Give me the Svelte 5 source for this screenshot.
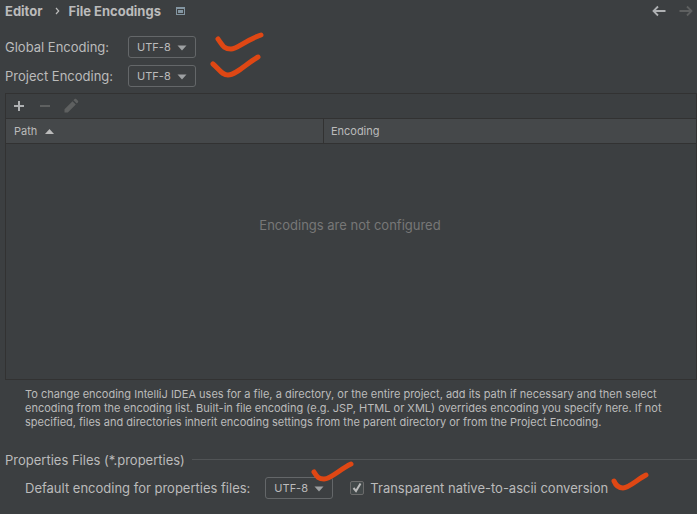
<script lang="ts">
	const encodings = ["UTF-8", "UTF-16", "US-ASCII", "ISO-8859-1"];

	let globalEncoding = $state("UTF-8");
	let projectEncoding = $state("UTF-8");
	let propertiesEncoding = $state("UTF-8");
	let nativeToAscii = $state(true);
</script>

{#snippet options()}
	{#each encodings as encoding}
		<option value={encoding}>{encoding}</option>
	{/each}
{/snippet}

{#snippet arrow()}
	<svg class="arrow" width="10" height="6" viewBox="0 0 10 6" aria-hidden="true">
		<path d="M0.5 0.5h9L5 5.5z" fill="#9da0a2" />
	</svg>
{/snippet}

<main class="settings">
	<header>
		<nav class="crumbs" aria-label="Breadcrumb">
			<a href="#editor">Editor</a>
			<svg width="5" height="8" viewBox="0 0 5 8" aria-hidden="true">
				<path d="M1 1l2.7 3L1 7" fill="none" stroke="#bbbbbb" stroke-width="1.2" />
			</svg>
			<a href="#file-encodings">File Encodings</a>
			<svg class="project-icon" width="9" height="8" viewBox="0 0 9 8" aria-hidden="true">
				<path d="M0 0h9v8H0zM1 2v5h7V2z" fill="#8496a2" fill-rule="evenodd" />
				<path d="M2 3h5v3H2z" fill="#8496a2" />
			</svg>
		</nav>
		<div class="history">
			<button aria-label="Back">
				<svg width="14" height="12" viewBox="0 0 14 12">
					<path d="M13.5 6H1.5M6 1.5L1.5 6L6 10.5" fill="none" stroke="#afb1b3" stroke-width="1.8" />
				</svg>
			</button>
			<button aria-label="Forward" disabled>
				<svg width="14" height="12" viewBox="0 0 14 12">
					<path d="M0.5 6h12M8 1.5l4.5 4.5L8 10.5" fill="none" stroke="#5e6060" stroke-width="1.8" />
				</svg>
			</button>
		</div>
	</header>

	<div class="encodings">
		<label for="global">Global Encoding:</label>
		<div class="select">
			<select id="global" bind:value={globalEncoding}>{@render options()}</select>
			{@render arrow()}
			<svg class="mark global" width="50" height="22" viewBox="0 0 50 22" aria-hidden="true">
				<path d="M3 7C8 14 9 17 16 17C22 17 31 8 46 3" />
			</svg>
		</div>
		<label for="project">Project Encoding:</label>
		<div class="select">
			<select id="project" bind:value={projectEncoding}>{@render options()}</select>
			{@render arrow()}
			<svg class="mark project" width="52" height="24" viewBox="0 0 52 24" aria-hidden="true">
				<path d="M3 10C10 16 12 21 18 21C26 21 37 9 48 3" />
			</svg>
		</div>
	</div>

	<section class="paths">
		<div class="toolbar">
			<button aria-label="Add">
				<svg width="16" height="16" viewBox="0 0 16 16">
					<path d="M8 3v10M3 8h10" stroke="#afb1b3" stroke-width="2" />
				</svg>
			</button>
			<button aria-label="Remove" disabled>
				<svg width="16" height="16" viewBox="0 0 16 16">
					<path d="M3 8h10" stroke="#5e6060" stroke-width="2" />
				</svg>
			</button>
			<button aria-label="Edit" disabled>
				<svg width="16" height="16" viewBox="0 0 16 16">
					<path d="M1.5 14.5v-3.3L9.5 3.2l3.3 3.3l-8 8zM10.4 2.3l1.2-1.2c.5-.5 1.1-.5 1.6 0l1.7 1.7c.5.5.5 1.1 0 1.6l-1.2 1.2z" fill="#5e6060" />
				</svg>
			</button>
		</div>
		<table>
			<thead>
				<tr>
					<th>
						Path
						<svg width="9" height="5" viewBox="0 0 9 5" aria-hidden="true">
							<path d="M0 5h9L4.5 0z" fill="#bbbbbb" />
						</svg>
					</th>
					<th>Encoding</th>
				</tr>
			</thead>
			<tbody>
				<tr>
					<td colspan="2">Encodings are not configured</td>
				</tr>
			</tbody>
		</table>
	</section>

	<p>
		To change encoding IntelliJ IDEA uses for a file, a directory, or the entire project, add its path if necessary and then select
		encoding from the encoding list. Built-in file encoding (e.g. JSP, HTML or XML) overrides encoding you specify here. If not
		specified, files and directories inherit encoding settings from the parent directory or from the Project Encoding.
	</p>

	<h2>Properties Files (*.properties)</h2>
	<div class="properties">
		<label for="properties">Default encoding for properties files:</label>
		<div class="select">
			<select id="properties" bind:value={propertiesEncoding}>{@render options()}</select>
			{@render arrow()}
			<svg class="mark properties-mark" width="44" height="22" viewBox="0 0 44 22" aria-hidden="true">
				<path d="M3 11C6 16 8 18 13 18C20 18 29 8 40 3" />
			</svg>
		</div>
		<label class="check">
			<input type="checkbox" bind:checked={nativeToAscii} />
			<svg width="14" height="14" viewBox="0 0 14 14" aria-hidden="true">
				<path d="M3.5 7l2.5 3l4.5-7.5" />
			</svg>
			<span>Transparent native-to-ascii conversion</span>
			<svg class="mark ascii" width="38" height="20" viewBox="0 0 38 20" aria-hidden="true">
				<path d="M3 9C5 14 8 16 12 16C18 16 27 7 35 3" />
			</svg>
		</label>
	</div>
</main>

<style>
	:global(body) {
		margin: 0;
		background: #3c3f41;
	}

	.settings {
		padding-left: 5px;
		border-bottom: 1px solid #37373a;
		color: #bbbbbb;
		font: 13px/16px Inter, "Liberation Sans", sans-serif;
	}

	header {
		display: flex;
		justify-content: space-between;
		align-items: center;
		height: 22px;
	}

	.crumbs {
		display: flex;
		align-items: center;
		font-weight: 700;
	}

	.crumbs a {
		color: inherit;
		text-decoration: none;
	}

	.crumbs > svg {
		margin: 0 9px 0 12px;
	}

	.crumbs > .project-icon {
		margin: 0 0 0 15px;
	}

	button {
		display: flex;
		padding: 0;
		border: 0;
		background: none;
	}

	.history {
		display: flex;
		gap: 13px;
		padding-right: 4px;
	}

	.encodings {
		display: grid;
		grid-template-columns: max-content max-content;
		gap: 7px 15px;
		align-items: center;
		margin-top: 14px;
	}

	.select {
		position: relative;
		width: 68px;
	}

	select {
		display: block;
		width: 100%;
		height: 22px;
		padding: 0 8px;
		border: 1px solid #646769;
		border-radius: 3px;
		appearance: none;
		background: #3c3f41;
		color: inherit;
		font: 11px/16px Inter, "Liberation Sans", sans-serif;
	}

	.arrow {
		position: absolute;
		top: 9px;
		right: 9px;
		pointer-events: none;
	}

	.mark {
		position: absolute;
		z-index: 1;
		fill: none;
		stroke: #df4714;
		stroke-width: 5;
		stroke-linecap: round;
		pointer-events: none;
	}

	.mark.global {
		top: -4px;
		left: 87px;
	}

	.mark.project {
		top: -11px;
		left: 82px;
	}

	.mark.properties-mark {
		top: -16px;
		left: 46px;
	}

	.mark.ascii {
		top: -8px;
		left: 100%;
		margin-left: 3px;
	}

	.paths {
		margin-top: 6px;
		border: 1px solid #323232;
	}

	.toolbar {
		display: flex;
		gap: 10px;
		align-items: center;
		height: 24px;
		padding-left: 5px;
	}

	table {
		width: 100%;
		border-collapse: collapse;
		table-layout: fixed;
	}

	th {
		height: 24px;
		padding: 0 8px;
		border: solid #323232;
		border-width: 1px 0;
		background: #45484a;
		font-size: 11px;
		font-weight: 400;
		text-align: left;
	}

	th:first-child {
		width: 46%;
		box-sizing: border-box;
	}

	th + th {
		border-left-width: 1px;
		padding-left: 7px;
	}

	th svg {
		margin: 0 0 1px 5px;
	}

	td {
		height: 235px;
		padding: 0 2px 72px 0;
		box-sizing: border-box;
		color: #777777;
		text-align: center;
	}

	p {
		margin: 7px 20px 0;
		font-size: 11px;
		line-height: 14px;
	}

	h2 {
		display: flex;
		align-items: center;
		gap: 7px;
		margin: 23px 0 0;
		font-size: 13px;
		font-weight: 400;
	}

	h2::after {
		content: "";
		flex: 1;
		height: 1px;
		background: #515456;
	}

	.properties {
		display: flex;
		align-items: center;
		gap: 15px;
		margin-top: 9px;
		padding: 0 0 15px 20px;
	}

	.check {
		display: flex;
		align-items: center;
		gap: 6px;
		position: relative;
		margin-left: 2px;
	}

	.check input {
		width: 14px;
		height: 14px;
		margin: 0;
		border: 1px solid #6b6b6b;
		border-radius: 2px;
		appearance: none;
		background: #43494a;
	}

	.check input + svg {
		position: absolute;
		left: 0;
		fill: none;
		stroke: #bbbbbb;
		stroke-width: 2;
		pointer-events: none;
	}

	.check input:not(:checked) + svg {
		display: none;
	}
</style>
